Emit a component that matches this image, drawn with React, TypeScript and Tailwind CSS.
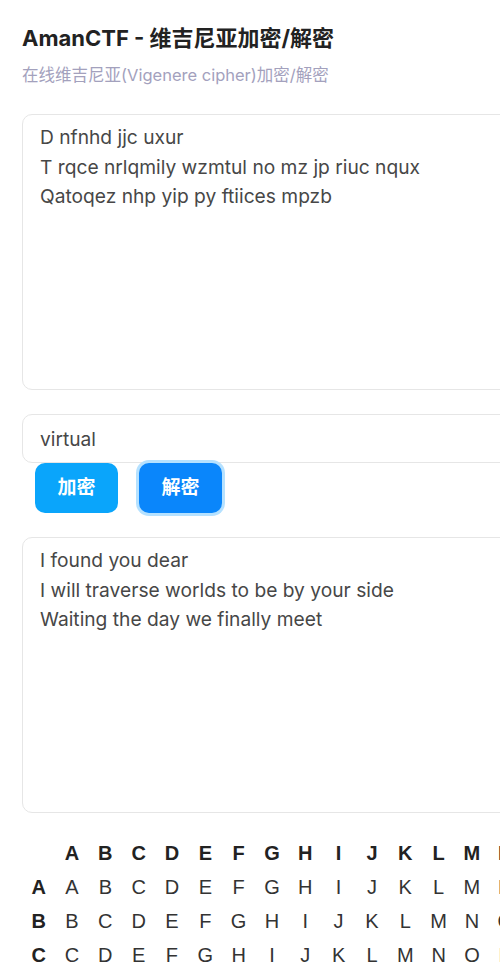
import { useState } from 'react';

const ALPHA = 'ABCDEFGHIJKLMNOPQRSTUVWXYZ'.split('');

const cnFont = { fontFamily: 'Inter, "Noto Sans CJK SC", sans-serif' };

function Table() {
  return (
    <div
      className="grid grid-cols-[repeat(27,33.33px)] auto-rows-[34px] items-center text-center text-[20px]"
      style={{ fontFamily: '"Liberation Sans", Arial, sans-serif' }}
    >
      <div />
      {ALPHA.map((c) => (
        <div key={c} className="font-bold text-[#222]">
          {c}
        </div>
      ))}
      {ALPHA.map((r, i) => [
        <div key={r} className="font-bold text-[#222]">
          {r}
        </div>,
        ...ALPHA.map((_, j) => (
          <div key={r + j} className="text-[#333]">
            {ALPHA[(i + j) % 26]}
          </div>
        )),
      ])}
    </div>
  );
}

export default function App() {
  const [input, setInput] = useState(
    'D nfnhd jjc uxur\nT rqce nrlqmily wzmtul no mz jp riuc nqux\nQatoqez nhp yip py ftiices mpzb'
  );
  const [key, setKey] = useState('virtual');
  const [output, setOutput] = useState(
    'I found you dear\nI will traverse worlds to be by your side\nWaiting the day we finally meet'
  );

  return (
    <div className="w-[920px] bg-white pl-[22px] pt-[24px]" style={cnFont}>
      <h1 className="text-[22px] font-bold leading-[28px] text-[#222]">AmanCTF - 维吉尼亚加密/解密</h1>
      <p className="mt-[11px] text-[16.5px] leading-[24px] text-[#a3a1bd]">在线维吉尼亚(Vigenere cipher)加密/解密</p>

      <div className="w-[880px] mt-[27px] flex flex-col">
        <textarea
          value={input}
          onChange={(e) => setInput(e.target.value)}
          className="h-[276px] resize-none rounded-[10px] border border-[#e6e6e6] px-[17px] py-[8px] text-[19.2px] leading-[29.5px] text-[#474747] outline-none"
        />

        <input
          value={key}
          onChange={(e) => setKey(e.target.value)}
          className="mt-[24px] h-[49px] rounded-[10px] border border-[#e6e6e6] px-[17px] text-[19.2px] text-[#474747] outline-none"
        />

        <div className="flex gap-[21px] pl-[13px]">
          <button className="h-[50px] w-[83px] rounded-[10px] bg-[#0aa5fb] text-[19px] font-bold text-white">加密</button>
          <button className="h-[50px] w-[83px] rounded-[10px] bg-[#0a86fb] text-[19px] font-bold text-white ring-[3px] ring-[#b5e1ff]">
            解密
          </button>
        </div>

        <textarea
          value={output}
          onChange={(e) => setOutput(e.target.value)}
          className="mt-[24px] h-[276px] resize-none rounded-[10px] border border-[#e6e6e6] px-[17px] py-[8px] text-[19.2px] leading-[29.5px] text-[#474747] outline-none"
        />

        <div className="mt-[23px]">
          <Table />
        </div>
      </div>
    </div>
  );
}
